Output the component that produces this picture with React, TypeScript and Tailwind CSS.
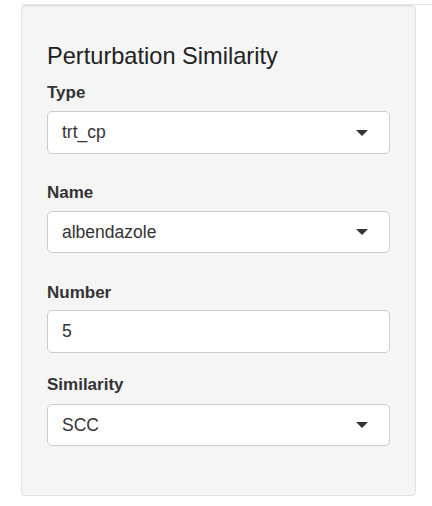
const fields = [
  { label: "Type", value: "trt_cp", select: true, labelGap: "mt-[14px]", boxGap: "mt-[8px]", h: "h-[43px]" },
  { label: "Name", value: "albendazole", select: true, labelGap: "mt-[29px]", boxGap: "mt-[8px]", h: "h-[42px]" },
  { label: "Number", value: "5", select: false, labelGap: "mt-[30px]", boxGap: "mt-[7px]", h: "h-[43px]" },
  { label: "Similarity", value: "SCC", select: true, labelGap: "mt-[22px]", boxGap: "mt-[9px]", h: "h-[42px]" },
];

function Caret() {
  return (
    <svg width="12" height="6" viewBox="0 0 12 6" className="shrink-0">
      <polygon points="0,0 12,0 6,6" fill="#333333" />
    </svg>
  );
}

export default function App() {
  return (
    <div
      className="min-h-[506px] w-[432px] bg-white pt-[4px] pl-[21px] text-[#333333]"
      style={{ fontFamily: '"Liberation Sans", Arial, sans-serif' }}
    >
      <div className="h-px bg-[#e6e6e6]" />
      <div className="w-[395px] rounded-[4px] border border-[#e3e3e3] bg-[#f5f5f5] px-[25px] pt-[37px] pb-[49px] shadow-[inset_0_1px_1px_rgba(0,0,0,0.05)]">
        <h3 className="text-[23.6px] leading-[26px] text-[#222222]">Perturbation Similarity</h3>
        {fields.map((f) => (
          <div key={f.label}>
            <div className={`${f.labelGap} text-[17px] leading-[20px] font-bold`}>{f.label}</div>
            <div
              className={`${f.boxGap} ${f.h} flex items-center justify-between rounded-[5px] border border-[#cccccc] bg-white pl-[14px] pr-[21px] text-[17.5px]`}
            >
              <span>{f.value}</span>
              {f.select && <Caret />}
            </div>
          </div>
        ))}
      </div>
    </div>
  );
}
